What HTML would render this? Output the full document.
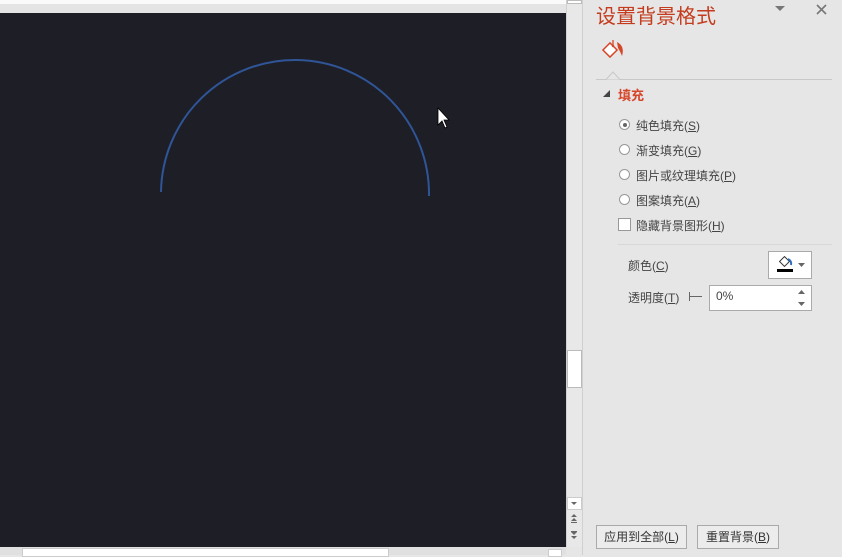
<!DOCTYPE html>
<html><head><meta charset="utf-8"><style>
body{margin:0;width:842px;height:555px;overflow:hidden;background:#e6e6e6;font-family:"Liberation Sans","Noto Sans CJK SC",sans-serif;position:relative}
.a{position:absolute}
.t{font-size:12px;color:#444}
.r{width:11px;height:11px;border:1px solid #999;border-radius:50%;background:#fff;box-sizing:border-box}
</style></head><body>
<div class="a" style="left:0;top:0;width:566px;height:4px;background:#fafafa"></div>
<div class="a" style="left:0;top:4px;width:566px;height:9px;background:#e4e4e4"></div>
<div class="a" style="left:0;top:13px;width:566px;height:534px;background:#1d1e26"></div>
<svg class="a" style="left:0;top:0" width="566" height="547"><path d="M161 192 A134 134 0 0 1 429 196" fill="none" stroke="#2f5597" stroke-width="2"/>
<path d="M438 108 L438 125 L442 121 L445 128 L447 127 L444 120 L449 120 Z" fill="#fff" stroke="#000" stroke-width="0.8"/></svg>
<div class="a" style="left:566px;top:0;width:16px;height:547px;background:#e8e8e8;border-left:1px solid #d0d0d0"></div>
<div class="a" style="left:567px;top:350px;width:13px;height:36px;background:#fff;border:1px solid #bbb"></div>
<div class="a" style="left:567px;top:0;width:13px;height:2px;background:#fff;border:1px solid #bbb"></div>
<div class="a" style="left:567px;top:497px;width:13px;height:11px;background:#fff;border:1px solid #ccc"></div>
<svg class="a" style="left:567px;top:497px" width="15" height="48"><path d="M4 5 L10 5 L7 8 Z" fill="#666"/>
<path d="M4 20 L10 20 L7 17 Z M4 24 L10 24 L7 21 Z" fill="#666"/><rect x="4" y="25" width="6" height="1" fill="#666"/>
<rect x="4" y="34" width="6" height="1" fill="#666"/><path d="M4 35 L10 35 L7 38 Z M4 39 L10 39 L7 42 Z" fill="#666"/></svg>
<div class="a" style="left:0;top:547px;width:566px;height:8px;background:#e0e0e0"></div>
<div class="a" style="left:22px;top:548px;width:365px;height:7px;background:#fff;border:1px solid #ccc"></div>
<div class="a" style="left:548px;top:549px;width:12px;height:6px;background:#fff;border:1px solid #ccc"></div>
<div class="a" style="left:582px;top:0;width:1px;height:555px;background:#d0d0d0"></div>
<div class="a" style="left:596px;top:0px;font-size:20px;color:#c43b1d">设置背景格式</div>
<svg class="a" style="left:775px;top:6px" width="10" height="6"><path d="M0 0 L10 0 L5 5 Z" fill="#777"/></svg>
<svg class="a" style="left:816px;top:4px" width="11" height="11"><path d="M1 1 L10 10 M10 1 L1 10" stroke="#777" stroke-width="1.6"/></svg>
<svg class="a" style="left:600px;top:36px" width="28" height="26"><rect x="5" y="9" width="10" height="10" transform="rotate(45 10 14)" fill="#fff" stroke="#d6472a" stroke-width="1.5"/><path d="M13 4 L13 10" stroke="#d6472a" stroke-width="1.3"/><circle cx="13" cy="10" r="1.2" fill="#d6472a"/><path d="M17 6 Q25 10 22 20 Q20 15 18 12" fill="#d6472a"/></svg>
<div class="a" style="left:596px;top:79px;width:236px;height:1px;background:#c8c8c8"></div>
<svg class="a" style="left:606px;top:71px" width="14" height="9"><path d="M0 8.5 L7 1 L14 8.5" fill="#e6e6e6" stroke="#c8c8c8"/></svg>
<svg class="a" style="left:603px;top:90px" width="7" height="7"><path d="M7 0 L7 7 L0 7 Z" fill="#444"/></svg>
<div class="a" style="left:618px;top:85px;font-size:13px;font-weight:bold;color:#d6472a">填充</div>
<div class="a r" style="left:619px;top:119px"></div><div class="a" style="left:622.5px;top:122.5px;width:4px;height:4px;border-radius:50%;background:#666"></div>
<div class="a t" style="left:636px;top:117px">纯色填充(<u>S</u>)</div>
<div class="a r" style="left:619px;top:144px"></div><div class="a t" style="left:636px;top:142px">渐变填充(<u>G</u>)</div>
<div class="a r" style="left:619px;top:169px"></div><div class="a t" style="left:636px;top:167px">图片或纹理填充(<u>P</u>)</div>
<div class="a r" style="left:619px;top:194px"></div><div class="a t" style="left:636px;top:192px">图案填充(<u>A</u>)</div>
<div class="a" style="left:618px;top:218px;width:13px;height:13px;border:1px solid #999;background:#fff;box-sizing:border-box"></div>
<div class="a t" style="left:636px;top:217px">隐藏背景图形(<u>H</u>)</div>
<div class="a" style="left:618px;top:244px;width:214px;height:1px;background:#d8d8d8"></div>
<div class="a t" style="left:628px;top:257px">颜色(<u>C</u>)</div>
<div class="a" style="left:768px;top:251px;width:44px;height:28px;background:#fff;border:1px solid #aaa;box-sizing:border-box"></div>
<div class="a" style="left:777px;top:269px;width:16px;height:3px;background:#000"></div>
<svg class="a" style="left:778px;top:254px" width="16" height="14"><rect x="3" y="4" width="7" height="7" transform="rotate(45 6.5 7.5)" fill="#fff" stroke="#333"/><path d="M10 5 Q14 7 13 11" stroke="#2f6fc0" stroke-width="2" fill="none"/></svg>
<svg class="a" style="left:798px;top:263px" width="8" height="5"><path d="M0 0 L7 0 L3.5 4 Z" fill="#666"/></svg>
<div class="a t" style="left:628px;top:289px">透明度(<u>T</u>)</div>
<div class="a" style="left:689px;top:292px;width:1px;height:9px;background:#666"></div>
<div class="a" style="left:690px;top:296px;width:12px;height:1px;background:#666"></div>
<div class="a" style="left:709px;top:285px;width:103px;height:26px;background:#fff;border:1px solid #aaa;box-sizing:border-box"></div>
<div class="a t" style="left:716px;top:289px">0%</div>
<svg class="a" style="left:798px;top:290px" width="8" height="16"><path d="M0 4 L7 4 L3.5 0 Z M0 12 L7 12 L3.5 16 Z" fill="#666"/></svg>
<div class="a" style="left:596px;top:525px;width:91px;height:24px;border:1px solid #aaa;box-sizing:border-box;background:#ececec;font-size:12px;color:#333;text-align:center;line-height:22px">应用到全部(<u>L</u>)</div>
<div class="a" style="left:697px;top:525px;width:82px;height:24px;border:1px solid #aaa;box-sizing:border-box;background:#ececec;font-size:12px;color:#333;text-align:center;line-height:22px">重置背景(<u>B</u>)</div>
</body></html>
